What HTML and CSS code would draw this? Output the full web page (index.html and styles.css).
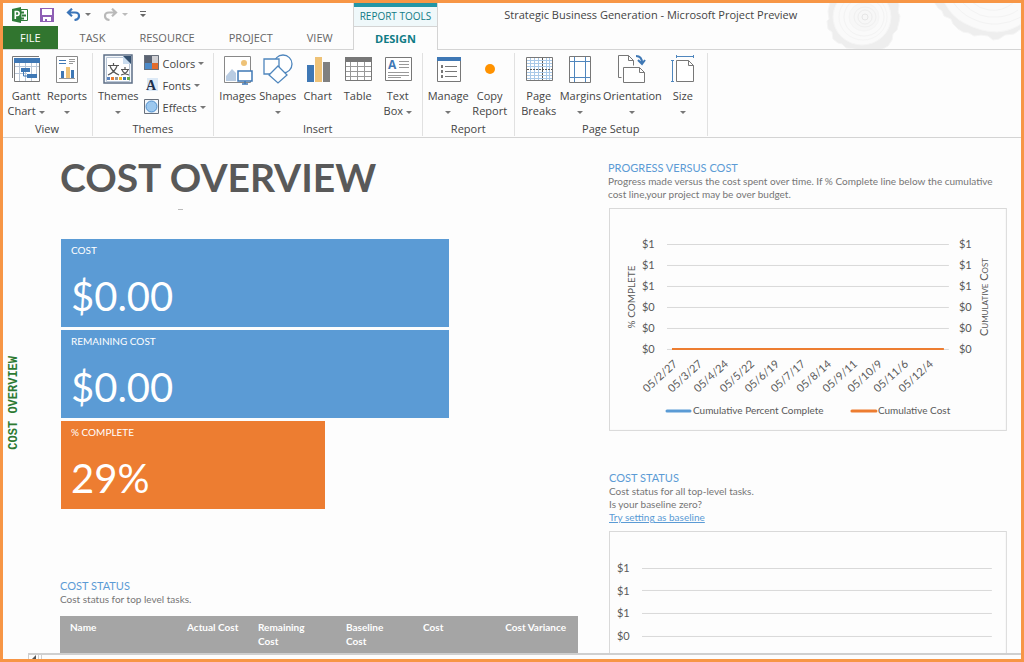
FILE: index.html
```html
<!DOCTYPE html>
<html lang="en">
	<head>
		<meta charset="UTF-8" />
		<meta name="viewport" content="width=device-width, initial-scale=1.0" />
		<title>Strategic Business Generation - Microsoft Project Preview</title>
		<link rel="stylesheet" href="styles.css">
	</head>
	<body>
		<header class="titlebar">
			<svg class="rings" width="206" height="46" viewBox="815 3 206 46" aria-hidden="true">
				<g fill="none" stroke="#f5f5f5">
					<path fill="#eee" d="M830 2l-2 9 1 8-2 2 1 8 4 3 1 7 5 4 4 1 4 4 8 1 8 2 12-1 9-1 5-3 4-6 1-6 4-4 2-8 1-6-2-4 1-7-2-8z" />
					<ellipse cx="862" cy="17" rx="29" ry="28" fill="#fafafa" />
					<ellipse cx="863" cy="17" rx="24" ry="23" />
					<ellipse cx="864" cy="17" rx="20" ry="19" stroke="#f3f3f3" />
					<ellipse cx="864" cy="17" rx="15" ry="14" fill="#f7f7f7" />
					<ellipse cx="865" cy="17" rx="11" ry="10" stroke="#f0f0f0" />
					<ellipse cx="865" cy="17" rx="7" ry="7" stroke="#ededed" />
					<ellipse cx="865" cy="17" rx="3" ry="3" stroke="#e6e6e6" />
					<path fill="#eee" d="M934 2l4 6 4 3 2 5 7 3 2 5 5 5 5 3 6 1 5 3 7-1 7 1 5 4 6-1 6-4 9-1 7-5v-27z" />
					<path fill="#fafafa" d="M944 2q8 15 20 21 17 9 33 9 14-1 24-8v-22z" />
					<path d="M953 2q8 12 20 17 13 6 25 5 12-1 23-7M962 2q8 9 18 13 9 3 18 2 12-1 20-7M972 2q8 7 17 8 13 2 24-7" stroke="#f3f3f3" />
				</g>
			</svg>
			<div class="quick-access">
				<svg width="16" height="16" viewBox="0 0 16 16" role="img" aria-label="Project">
					<path fill="#2f7d3b" d="M0 2l9-2v16l-9-2z" />
					<path fill="#fff" stroke="#2f7d3b" d="M9 2.500h6.500v11H9z" />
					<path fill="none" stroke="#fff" stroke-width="1.600" d="M3.300 12V4.500h1.800q2 0 2 2t-2 2H3.300" />
					<path stroke="#2f7d3b" stroke-width="2" d="M9 5.500h3M10 8.500h4M9 11.500h3" />
				</svg>
				<button type="button" class="icon-btn" aria-label="Save">
					<svg width="14" height="14" viewBox="0 0 14 14">
						<path fill="#8e5fb5" d="M0 0h14v14H0z" />
						<path fill="#fff" d="M2 1h10v6H2zM3 9h8v4H7v-2H5v2H3z" />
					</svg>
				</button>
				<button type="button" class="icon-btn undo" aria-label="Undo">
					<svg width="15" height="13" viewBox="0 0 15 13">
						<path fill="none" stroke="#3a74b8" stroke-width="2.200" d="M6 .700L2 4.500l4 3.800M2.500 4.500h6.500q4 0 4 3.500t-4.500 4" />
					</svg>
					<span class="caret"></span>
				</button>
				<button type="button" class="icon-btn redo" aria-label="Redo" disabled>
					<svg width="15" height="13" viewBox="0 0 15 13">
						<path fill="none" stroke="#b9b9b9" stroke-width="2.200" d="M9 .700l4 3.800-4 3.800M12.500 4.500H6q-4 0-4 3.500t4.500 4" />
					</svg>
					<span class="caret"></span>
				</button>
				<button type="button" class="icon-btn" aria-label="Customize Quick Access Toolbar">
					<svg width="6" height="7" viewBox="0 0 6 7"><path fill="#666" d="M0 0h6v1H0zM0 3h6L3 6z" /></svg>
				</button>
			</div>
			<nav class="tabs">
				<button type="button" class="tab file">FILE</button>
				<button type="button" class="tab">TASK</button>
				<button type="button" class="tab">RESOURCE</button>
				<button type="button" class="tab">PROJECT</button>
				<button type="button" class="tab">VIEW</button>
			</nav>
			<div class="context">
				<span class="context-name">REPORT TOOLS</span>
				<button type="button" class="tab active">DESIGN</button>
			</div>
			<div class="window-title">Strategic Business Generation - Microsoft Project Preview</div>
		</header>

		<section class="ribbon">
			<div class="group">
				<div class="tools">
					<button type="button" class="tool">
						<svg width="32" height="32" viewBox="0 0 32 32">
							<path fill="none" stroke="#777" d="M2.500 25V3.500H29" />
							<path fill="#fff" stroke="#777" d="M4.500 5.500h25v23h-25z" />
							<path fill="#3f78b5" d="M4 5h26v5H4z" />
							<path stroke="#b9c6d6" d="M9.500 10v18M15.500 10v5M15.500 19v9M21.500 10v11M21.500 25v3M26.500 10v11M5 13.500h24M5 20.500h12" />
							<path fill="none" stroke="#3f78b5" d="M13.500 19v4H17" />
							<path fill="#3f78b5" d="M11 15h9v4h-9zM17 21h10v4H17z" />
						</svg>
						<span>Gantt<br />Chart <i class="caret"></i></span>
					</button>
					<button type="button" class="tool">
						<svg width="32" height="32" viewBox="0 0 32 32">
							<path fill="#fff" stroke="#888" d="M5.500 3.500h21v26h-21z" />
							<path stroke="#3f78b5" d="M8 7.500h7M8 10.500h7" />
							<path stroke="#999" d="M18 6.500h6M18 8.500h6M18 10.500h4M8 25.500h16" />
							<path fill="#3f78b5" d="M10 18h3v7h-3zM20 17h3v8h-3z" />
							<path fill="#eec277" d="M15 14h4v11h-4z" />
						</svg>
						<span>Reports<br /><i class="caret"></i></span>
					</button>
				</div>
				<div class="group-name">View</div>
			</div>

			<div class="group">
				<div class="tools">
					<button type="button" class="tool">
						<svg width="32" height="32" viewBox="0 0 32 32">
							<path fill="#f4f8fc" stroke="#5d6f86" stroke-width="1.500" d="M2 2h28v28H2z" />
							<path fill="#fff" stroke="#b9c6d6" d="M4.500 4.500h17l6 6v18h-23z" />
							<path fill="#34506f" d="M21 3h8v8h-5z" />
							<path fill="#c9dcef" d="M21 3l8 8h-8z" />
							<path fill="none" stroke="#555" stroke-width="1.200" d="M6 12.500h11M11.500 10v2.500M8 13q2 6 9 9M15 13q-2 6-9 9M19 16.500h8M23 14v2.500M20 17q2 4 7 5M26 17q-2 4-7 5" />
							<path fill="#5b84bd" d="M5 24h3v3H5z" />
							<path fill="#ed7d31" d="M9 24h3v3H9z" />
							<path fill="#999" d="M13 24h3v3h-3z" />
							<path fill="#f5bd21" d="M17 24h3v3h-3z" />
							<path fill="#3f78b5" d="M21 24h3v3h-3z" />
							<path fill="#65a844" d="M25 24h3v3h-3z" />
						</svg>
						<span>Themes<br /><i class="caret"></i></span>
					</button>
					<div class="small-tools">
						<button type="button" class="small-tool">
							<svg width="16" height="16" viewBox="0 0 16 16">
								<path fill="#5b6372" d="M0 0h8v8H0z" />
								<path fill="#d0d0d4" d="M8 0h7v8H8z" />
								<path fill="#4d8bc9" d="M0 8h8v7H0z" />
								<path fill="#e36c2c" d="M8 8h7v7H8z" />
								<path fill="none" stroke="#68707c" d="M.500.500h14v14H.500z" />
							</svg>
							Colors <i class="caret"></i>
						</button>
						<button type="button" class="small-tool">
							<svg width="16" height="16" viewBox="0 0 16 16">
								<path fill="#dce9f6" d="M3 1h11v13H3z" />
								<text class="font-glyph" x="2" y="13">A</text>
							</svg>
							Fonts <i class="caret"></i>
						</button>
						<button type="button" class="small-tool">
							<svg width="16" height="16" viewBox="0 0 16 16">
								<path fill="#f2f6fa" stroke="#68707c" d="M.500.500h14v14H.500z" />
								<circle cx="7.500" cy="7.500" r="5.500" fill="#9cc8ef" stroke="#4f8fce" />
							</svg>
							Effects <i class="caret"></i>
						</button>
					</div>
				</div>
				<div class="group-name">Themes</div>
			</div>

			<div class="group">
				<div class="tools">
					<button type="button" class="tool">
						<svg width="32" height="32" viewBox="0 0 32 32">
							<path fill="#fff" stroke="#888" d="M2.500 3.500h26v26h-26z" />
							<circle cx="22" cy="10" r="3" fill="#eec277" />
							<path fill="#b9cce2" d="M4 28V23l6-7 4 4v8z" />
							<path fill="#fff" stroke="#3f78b5" stroke-width="1.500" d="M16 18h14v10H16z" />
							<path stroke="#3f78b5" stroke-width="1.500" d="M23 28v3M20 31h6" />
						</svg>
						<span>Images</span>
					</button>
					<button type="button" class="tool">
						<svg width="32" height="32" viewBox="0 0 32 32">
							<g fill="#fff" stroke="#4f86bd" stroke-width="1.300">
								<circle cx="21" cy="11" r="9" />
								<path d="M2 6h15v15H2z" />
								<path d="M16 13l9 9-9 8-9-8z" />
							</g>
						</svg>
						<span>Shapes<br /><i class="caret"></i></span>
					</button>
					<button type="button" class="tool">
						<svg width="32" height="32" viewBox="0 0 32 32">
							<path fill="#3f78b5" d="M5 12h7v17H5z" />
							<path fill="#eec277" d="M13 4h7v25h-7z" />
							<path fill="#808080" d="M21 9h7v20h-7z" />
						</svg>
						<span>Chart</span>
					</button>
					<button type="button" class="tool">
						<svg width="32" height="32" viewBox="0 0 32 32">
							<path fill="#fff" stroke="#777" d="M3.500 4.500h26v23h-26z" />
							<path fill="#777" d="M3 4h27v5H3z" />
							<path stroke="#999" d="M8.500 9v18M15.500 9v18M22.500 9v18M4 13.500h25M4 18.500h25M4 23.500h25" />
						</svg>
						<span>Table</span>
					</button>
					<button type="button" class="tool">
						<svg width="32" height="32" viewBox="0 0 32 32">
							<path fill="#fff" stroke="#777" d="M3.500 4.500h26v23h-26z" />
							<text class="box-glyph" x="6" y="16">A</text>
							<path stroke="#999" d="M17 8.500h10M17 11.500h10M17 14.500h10M6 19.500h21M6 22.500h21M6 24.500h13" />
						</svg>
						<span>Text<br />Box <i class="caret"></i></span>
					</button>
				</div>
				<div class="group-name">Insert</div>
			</div>

			<div class="group">
				<div class="tools">
					<button type="button" class="tool">
						<svg width="32" height="32" viewBox="0 0 32 32">
							<path fill="#fff" stroke="#777" d="M5.500 4.500h23v24h-23z" />
							<path fill="#3f78b5" d="M5 4h24v4H5z" />
							<path fill="none" stroke="#777" d="M13 13.500h12M13 18.500h12M13 23.500h12" />
							<path fill="#777" d="M9 12h2v3H9zM9 17h2v3H9zM9 22h2v3H9z" />
						</svg>
						<span>Manage<br /><i class="caret"></i></span>
					</button>
					<button type="button" class="tool">
						<svg width="32" height="32" viewBox="0 0 32 32"><circle cx="16" cy="16" r="5" fill="#ff9200" /></svg>
						<span>Copy<br />Report</span>
					</button>
				</div>
				<div class="group-name">Report</div>
			</div>

			<div class="group">
				<div class="tools">
					<button type="button" class="tool">
						<svg width="32" height="32" viewBox="0 0 32 32">
							<path fill="#fff" stroke="#777" d="M3.500 4.500h26v23h-26z" />
							<path stroke="#a9c9e8" d="M7.500 5v22M11.500 5v22M15.500 5v22M23.500 5v22M26.500 5v22M4 7.500h25M4 10.500h25M4 13.500h25M4 19.500h25M4 22.500h25M4 25.500h25" />
							<path stroke="#555" stroke-dasharray="2 1" d="M19.500 5v22M4 16.500h25" />
						</svg>
						<span>Page<br />Breaks</span>
					</button>
					<button type="button" class="tool">
						<svg width="32" height="32" viewBox="0 0 32 32">
							<path fill="#fff" stroke="#777" d="M5.500 3.500h21v26h-21z" />
							<path stroke="#4f86bd" d="M10.500 4v25M21.500 4v25M6 8.500h20M6 24.500h20" />
						</svg>
						<span>Margins<br /><i class="caret"></i></span>
					</button>
					<button type="button" class="tool">
						<svg width="32" height="32" viewBox="0 0 32 32">
							<path fill="#fff" stroke="#777" d="M2.500 24.500v-22h10l5 5v17zM12.500 2.500v5h5" />
							<path fill="#fff" stroke="#fdfdfd" stroke-width="4" d="M7.500 14.500h16l5 5v10h-21z" />
							<path fill="#fff" stroke="#777" d="M7.500 14.500h16l5 5v10h-21zM23.500 14.500v5h5" />
							<path fill="none" stroke="#3f78b5" stroke-width="2" d="M20 3q6 0 6 7M22 7l4 4 3-4" />
						</svg>
						<span>Orientation<br /><i class="caret"></i></span>
					</button>
					<button type="button" class="tool">
						<svg width="32" height="32" viewBox="0 0 32 32">
							<path fill="#fff" stroke="#777" d="M9.500 7.500h12l5 5v16h-17zM21.500 7.500v5h5" />
							<path stroke="#4f86bd" d="M9 3.500h17M9.500 2v3M26.500 2v3M5.500 8v21M4 7.500h3M4 28.500h3" />
						</svg>
						<span>Size<br /><i class="caret"></i></span>
					</button>
				</div>
				<div class="group-name">Page Setup</div>
			</div>
		</section>

		<main class="report">
			<div class="side"><span class="side-label">COST OVERVIEW</span></div>

			<div class="left">
				<h1>COST OVERVIEW</h1>
				<div class="dash"></div>
				<div class="tiles">
					<div class="tile"><h2>COST</h2><p>$0.00</p></div>
					<div class="tile"><h2>REMAINING COST</h2><p>$0.00</p></div>
					<div class="tile complete"><h2>% COMPLETE</h2><p>29%</p></div>
				</div>
				<h3>COST STATUS</h3>
				<p class="note">Cost status for top level tasks.</p>
				<table class="status">
					<colgroup>
						<col class="col-name" />
						<col class="col-actual" />
						<col class="col-remaining" />
						<col class="col-baseline" />
						<col class="col-cost" />
						<col />
					</colgroup>
					<thead>
						<tr>
							<th>Name</th>
							<th>Actual Cost</th>
							<th>Remaining<br />Cost</th>
							<th>Baseline<br />Cost</th>
							<th>Cost</th>
							<th class="variance">Cost Variance</th>
						</tr>
					</thead>
				</table>
			</div>

			<div class="right">
				<h3>PROGRESS VERSUS COST</h3>
				<p class="note">Progress made versus the cost spent over time. If % Complete line below the cumulative<br />cost line,your project may be over budget.</p>
				<svg class="chart" viewBox="0 0 398 223" role="img" aria-label="Progress versus cost">
					<rect class="frame" x="0.500" y="0.500" width="397" height="222" />
					<path class="grid" d="M58 36.500h282M58 57.500h282M58 78.500h282M58 99.500h282M58 120.500h282M58 141.500h282" />
					<path stroke="#ed7d31" stroke-width="2" d="M63 141h272" />
					<g class="axis">
						<text x="33" y="40">$1</text>
						<text x="33" y="61">$1</text>
						<text x="33" y="82">$1</text>
						<text x="33" y="103">$0</text>
						<text x="33" y="124">$0</text>
						<text x="33" y="145">$0</text>
						<text x="350" y="40">$1</text>
						<text x="350" y="61">$1</text>
						<text x="350" y="82">$1</text>
						<text x="350" y="103">$0</text>
						<text x="350" y="124">$0</text>
						<text x="350" y="145">$0</text>
					</g>
					<g class="dates">
						<text transform="translate(69 157) rotate(-42)">05/2/27</text>
						<text transform="translate(94 157) rotate(-42)">05/3/27</text>
						<text transform="translate(120 157) rotate(-42)">05/4/24</text>
						<text transform="translate(146 157) rotate(-42)">05/5/22</text>
						<text transform="translate(171 157) rotate(-42)">05/6/19</text>
						<text transform="translate(197 157) rotate(-42)">05/7/17</text>
						<text transform="translate(223 157) rotate(-42)">05/8/14</text>
						<text transform="translate(249 157) rotate(-42)">05/9/11</text>
						<text transform="translate(274 157) rotate(-42)">05/10/9</text>
						<text transform="translate(300 157) rotate(-42)">05/11/6</text>
						<text transform="translate(325 157) rotate(-42)">05/12/4</text>
					</g>
					<text class="axis-title" transform="translate(26 89) rotate(-90)">% COMPLETE</text>
					<text class="axis-title caps" transform="translate(379 89) rotate(-90)">Cumulative Cost</text>
					<path stroke="#5b9bd5" stroke-width="3" stroke-linecap="round" d="M58 203h23" />
					<text class="legend" x="84" y="206">Cumulative Percent Complete</text>
					<path stroke="#ed7d31" stroke-width="3" stroke-linecap="round" d="M243 203h24" />
					<text class="legend" x="269" y="206">Cumulative Cost</text>
				</svg>

				<div class="block">
					<h3>COST STATUS</h3>
					<p class="note">Cost status for all top-level tasks.<br />Is your baseline zero?</p>
					<a class="note" href="#">Try setting as baseline</a>
				</div>
				<svg class="chart" viewBox="0 0 398 223" role="img" aria-label="Cost status">
					<rect class="frame" x="0.500" y="0.500" width="397" height="222" />
					<path class="grid" d="M33 37.500h350M33 59.500h350M33 82.500h350M33 105.500h350" />
					<g class="axis">
						<text x="8" y="41">$1</text>
						<text x="8" y="64">$1</text>
						<text x="8" y="86">$1</text>
						<text x="8" y="109">$0</text>
					</g>
				</svg>
			</div>
		</main>

		<footer class="scroll">
			<button type="button" class="scroll-btn" aria-label="Scroll left">
				<svg width="4" height="4" viewBox="0 0 4 4"><path fill="#555" d="M4 0v4H0z" /></svg>
			</button>
			<div class="scroll-track"></div>
		</footer>
	</body>
</html>
```
FILE: styles.css
```css
* {
	box-sizing: border-box;
}
body {
	display: flex;
	flex-direction: column;
	height: 100vh;
	margin: 0;
	border: 3px solid #f79646;
	background-color: #fdfdfd;
	color: #444;
	font-family: 'Open Sans', 'Noto Sans', sans-serif;
	font-size: 11px;
	overflow: hidden;
}
button {
	margin: 0;
	padding: 0;
	border: 0;
	background: none;
	color: inherit;
	font: inherit;
}
h1,
h2,
h3,
p {
	margin: 0;
	font-weight: normal;
}
.caret {
	display: inline-block;
	border: 3px solid transparent;
	border-top-color: #777;
	border-bottom: 0;
	vertical-align: middle;
}

/* title bar and tabs */
.titlebar {
	position: relative;
	display: grid;
	grid-template-columns: auto auto 1fr;
	grid-template-rows: 23px 23px;
	flex-shrink: 0;
	border-bottom: 1px solid #d4d4d4;
}
.rings {
	position: absolute;
	top: 0;
	right: 0;
}
.quick-access {
	display: flex;
	align-items: center;
	gap: 12px;
	padding-left: 9px;
}
.icon-btn {
	display: flex;
	align-items: center;
	gap: 4px;
}
.redo .caret {
	border-top-color: #bbb;
}
.tabs {
	display: flex;
	grid-row: 2;
	padding-right: 3px;
}
.tab {
	padding: 0 17px;
	color: #666;
}
.tab.file {
	margin-right: 5px;
	background-color: #31752f;
	color: #fff;
}
.context {
	display: flex;
	flex-direction: column;
	grid-row: 1 / 3;
	grid-column: 2;
	margin-bottom: -1px;
	border: 1px solid #d4d4d4;
	border-width: 0 1px;
	color: #0f7b85;
	text-align: center;
}
.context-name {
	height: 23px;
	padding: 0 6px;
	border-top: 4px solid #2396a6;
	background-color: #eff8fa;
	font-size: 10px;
	line-height: 19px;
}
.tab.active {
	flex: 1;
	border-top: 1px solid #d4d4d4;
	background-color: #fdfdfd;
	color: #0f7b85;
	font-weight: bold;
}
.window-title {
	position: relative;
	padding-left: 66px;
	line-height: 24px;
}

/* ribbon */
.ribbon {
	display: flex;
	flex-shrink: 0;
	height: 88px;
	padding: 3px 0 1px;
	border-bottom: 1px solid #d4d4d4;
}
.group {
	display: flex;
	flex-direction: column;
	justify-content: space-between;
	padding: 0 4px;
	border-right: 1px solid #e1e1e1;
}
.group:first-child {
	padding-left: 3px;
}
.tools {
	display: flex;
}
.tool {
	display: flex;
	flex-direction: column;
	align-items: center;
	gap: 3px;
	min-width: 40px;
	padding: 0 1px;
	line-height: 15px;
}
.group-name {
	line-height: 15px;
	text-align: center;
}
.small-tools {
	display: flex;
	flex-direction: column;
	gap: 6px;
	padding: 2px 3px 0 4px;
}
.small-tool {
	display: flex;
	align-items: center;
	gap: 3px;
	height: 16px;
}
.font-glyph,
.box-glyph {
	fill: #1f2f4a;
	font-family: 'Liberation Serif', serif;
	font-size: 14px;
	font-weight: bold;
}
.box-glyph {
	fill: #3f78b5;
	font-family: 'Open Sans', sans-serif;
	font-size: 12px;
}

/* report */
.report {
	display: grid;
	grid-template-columns: 57px minmax(0, 518fr) minmax(0, 436fr);
	flex: 1;
	min-height: 0;
	padding-right: 7px;
	font-family: Lato, sans-serif;
	overflow: hidden;
}
.side {
	padding: 218px 0 0 4px;
}
.side-label {
	color: #2d7a33;
	font-family: 'Liberation Mono', monospace;
	font-size: 12px;
	font-weight: bold;
	line-height: 14px;
	writing-mode: vertical-rl;
	transform: rotate(180deg);
}
h1 {
	padding-top: 13px;
	color: #595959;
	font-size: 39px;
	font-weight: bold;
	line-height: 52px;
}
.dash {
	width: 5px;
	height: 1px;
	margin: 6px 0 29px 118px;
	background-color: #bbb;
}
.tiles {
	display: grid;
	gap: 3px;
	margin: 0 0 69px 1px;
}
.tile {
	width: 75%;
	height: 88px;
	padding: 3px 10px;
	background-color: #5b9bd5;
	color: #fff;
}
.tile.complete {
	width: 51%;
	background-color: #ed7d31;
}
.tile h2 {
	font-size: 10px;
	line-height: 16px;
}
.tile p {
	padding-top: 12px;
	font-size: 40px;
	line-height: 52px;
}
h3 {
	color: #5b9bd5;
	font-size: 11px;
	line-height: 15px;
}
.note {
	display: block;
	color: #767676;
	font-size: 10px;
	line-height: 13px;
	white-space: nowrap;
}
.status {
	width: 100%;
	margin-top: 10px;
	border-collapse: collapse;
	table-layout: fixed;
	background-color: #a5a5a5;
	color: #fff;
}
.status th {
	height: 60px;
	padding: 4px 0 0 10px;
	font-size: 10px;
	line-height: 14px;
	text-align: left;
	vertical-align: top;
}
.status .variance {
	padding-right: 12px;
	text-align: right;
}
.col-name {
	width: 117px;
}
.col-actual {
	width: 71px;
}
.col-remaining {
	width: 88px;
}
.col-baseline,
.col-cost {
	width: 77px;
}
.right {
	margin-left: 30px;
	padding-top: 22px;
}
a.note {
	color: #5b9bd5;
}
.chart {
	display: block;
	width: 98%;
	margin: 7px 0 0 1px;
}
.frame {
	fill: none;
	stroke: #d9d9d9;
}
.grid {
	stroke: #d9d9d9;
}
.axis,
.dates,
.legend,
.axis-title {
	fill: #595959;
	font-size: 11px;
}
.dates {
	text-anchor: end;
}
.legend,
.axis-title {
	font-size: 10px;
}
.axis-title {
	text-anchor: middle;
}
.axis-title.caps {
	font-size: 11px;
	font-variant: small-caps;
}
.block {
	margin: 39px 0 0 1px;
}

/* horizontal scroll bar */
.scroll {
	display: flex;
	flex-shrink: 0;
	gap: 2px;
	height: 6px;
	margin-left: 25px;
	border-top: 2px solid #cfcfcf;
}
.scroll-btn {
	display: flex;
	justify-content: center;
	width: 11px;
	border: 1px solid #cfcfcf;
	border-width: 0 1px;
}
.scroll-track {
	flex: 1;
	border-left: 1px solid #cfcfcf;
}
```
